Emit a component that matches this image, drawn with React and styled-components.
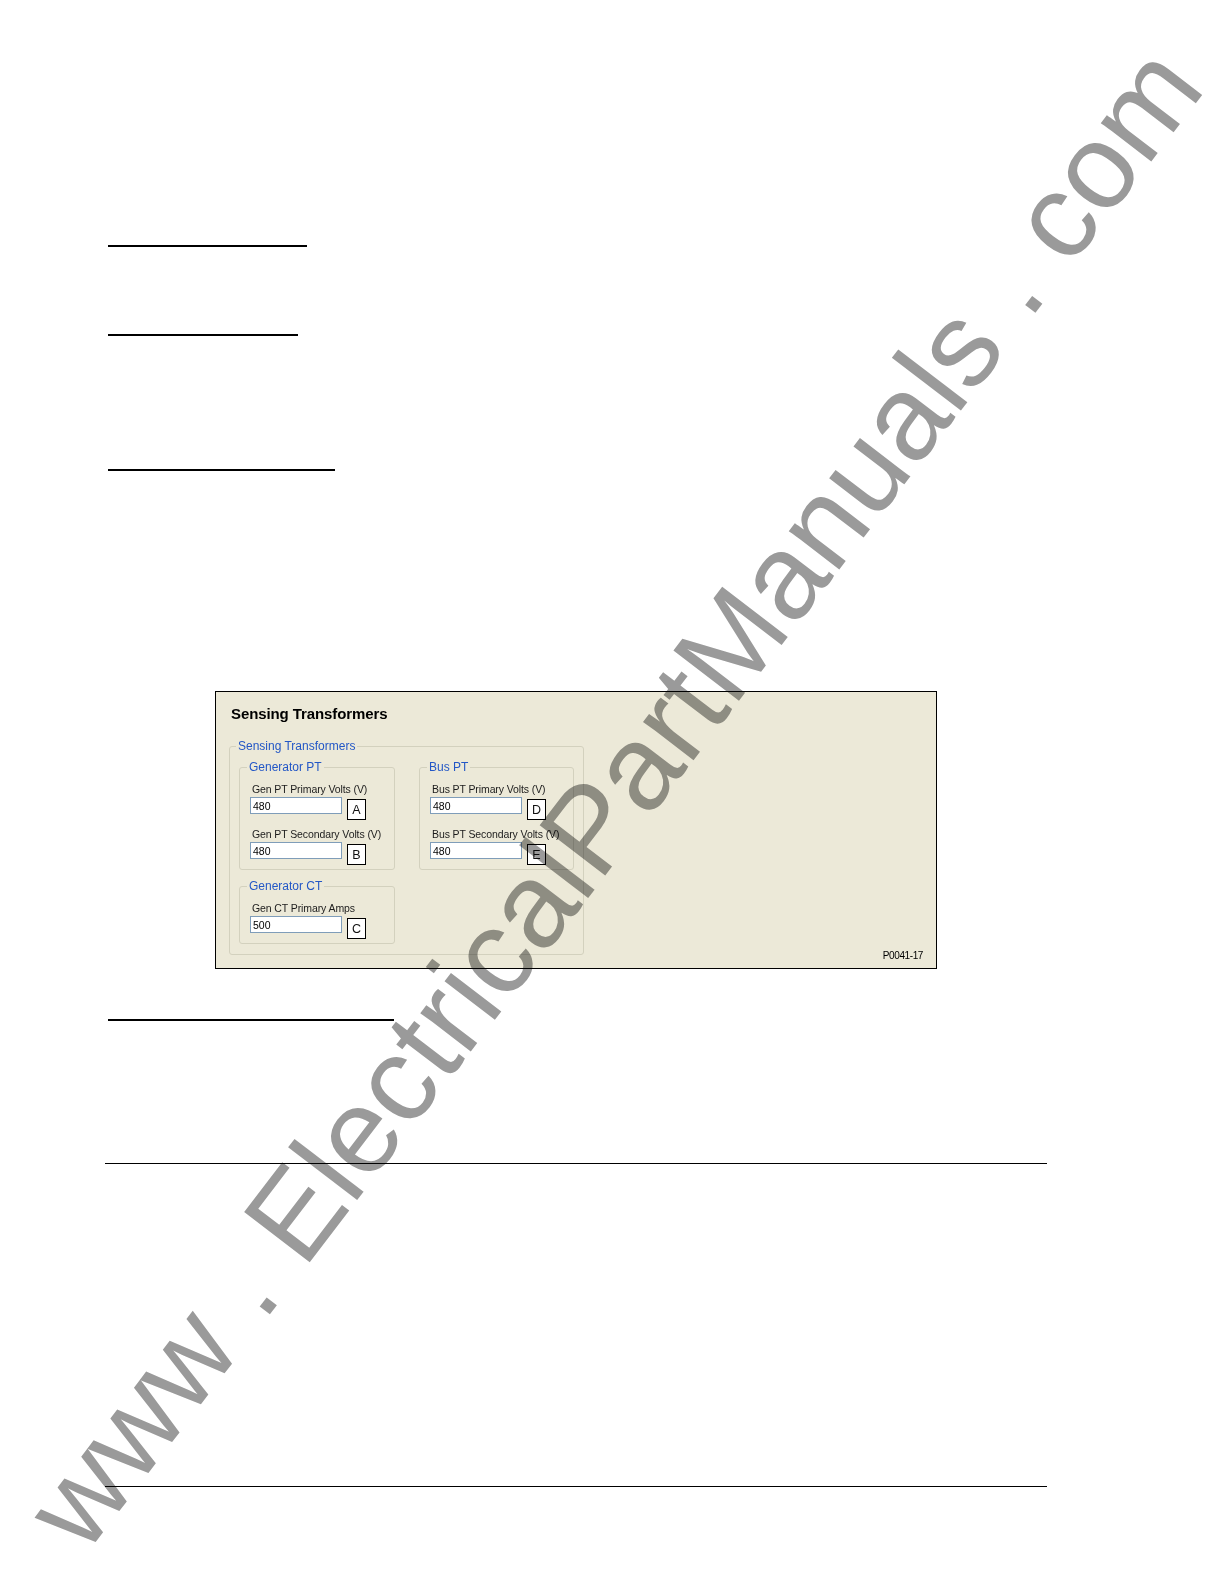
import React from "react";
import styled, { createGlobalStyle } from "styled-components";

const GlobalStyle = createGlobalStyle`
  html, body {
    margin: 0;
    padding: 0;
    background: #fff;
  }
`;

const Page = styled.div`
  position: relative;
  width: 1224px;
  height: 1584px;
  overflow: hidden;
  background: #fff;
  display: flex;
  flex-direction: column;
  align-items: flex-start;
  font-family: "Liberation Sans", Arial, sans-serif;
`;

const Rule = styled.div`
  width: ${({ $w }) => $w}px;
  height: ${({ $thick }) => $thick || 2}px;
  margin-top: ${({ $top }) => $top}px;
  margin-left: ${({ $left }) => $left || 108}px;
  background: #000;
`;

const Panel = styled.section`
  box-sizing: border-box;
  width: 722px;
  height: 278px;
  margin-top: ${({ $top }) => $top}px;
  margin-left: 215px;
  padding: 13px 13px 6px 13px;
  border: 1px solid #000;
  background: #ece9d8;
  display: flex;
  flex-direction: column;
`;

const PanelTitle = styled.h1`
  margin: 0 0 0 2px;
  font-size: 15px;
  line-height: 18px;
  font-weight: 700;
  color: #000;
  letter-spacing: -0.1px;
`;

const PanelBody = styled.div`
  flex: 1;
  display: flex;
  justify-content: space-between;
  align-items: flex-start;
`;

const Group = styled.fieldset`
  margin: 16px 0 0 0;
  padding: ${({ $pad }) => $pad};
  border: 1px solid #d3d1be;
  border-radius: 3px;
  min-width: 0;
`;

const Legend = styled.legend`
  margin-left: -3px;
  padding: 0 2px;
  font-size: 12px;
  line-height: 14px;
  color: #2357c6;
  white-space: nowrap;
`;

const SubGroup = styled(Group)`
  margin: 0;
  width: ${({ $w }) => $w}px;
  box-sizing: border-box;
`;

const GroupGrid = styled.div`
  display: grid;
  grid-template-columns: 156px 155px;
  column-gap: 24px;
  row-gap: 9px;
  align-items: start;
`;

const Field = styled.div`
  display: flex;
  flex-direction: column;
  & + & {
    margin-top: 8px;
  }
`;

const FieldLabel = styled.label`
  padding-left: 2px;
  font-size: 10.5px;
  line-height: 13px;
  color: #1c1c1c;
  white-space: nowrap;
  letter-spacing: -0.1px;
`;

const FieldRow = styled.div`
  display: flex;
  align-items: flex-start;
  gap: 5px;
  margin-top: 1px;
`;

const ValueInput = styled.input`
  box-sizing: border-box;
  width: 92px;
  height: 17px;
  margin: 0;
  padding: 0 2px;
  border: 1px solid #7f9db9;
  background: #fff;
  font-family: "Liberation Sans", Arial, sans-serif;
  font-size: 10.5px;
  color: #000;
  outline: none;
`;

const Callout = styled.span`
  box-sizing: border-box;
  width: 19px;
  height: 21px;
  margin-top: 2px;
  border: 1px solid #000;
  background: #fff;
  display: flex;
  align-items: center;
  justify-content: center;
  padding-top: 2px;
  font-size: 12.5px;
  line-height: 1;
  color: #111;
`;

const FigureId = styled.span`
  align-self: flex-end;
  font-size: 10px;
  line-height: 12px;
  letter-spacing: -0.4px;
  color: #000;
`;

const Watermark = styled.div`
  position: absolute;
  left: 4px;
  top: 1494px;
  transform-origin: 0 0;
  transform: rotate(-52.6deg);
  font-family: "Liberation Sans", Arial, sans-serif;
  font-size: 120px;
  line-height: 1;
  white-space: pre;
  color: #9a9a9a;
  mix-blend-mode: multiply;
  pointer-events: none;
`;

const InputField = ({ label, value, mark }) => (
  <Field>
    <FieldLabel>{label}</FieldLabel>
    <FieldRow>
      <ValueInput readOnly value={value} />
      <Callout>{mark}</Callout>
    </FieldRow>
  </Field>
);

export default function App() {
  return (
    <>
      <GlobalStyle />
      <Page>
        <Rule $w={199} $top={245} />
        <Rule $w={190} $top={87} />
        <Rule $w={227} $top={133} />

        <Panel $top={220}>
          <PanelTitle>Sensing Transformers</PanelTitle>
          <PanelBody>
            <Group $pad="7px 9px 10px 9px">
              <Legend>Sensing Transformers</Legend>
              <GroupGrid>
                <SubGroup $w={156} $pad="9px 9px 4px 10px">
                  <Legend>Generator PT</Legend>
                  <InputField label="Gen PT Primary Volts (V)" value="480" mark="A" />
                  <InputField label="Gen PT Secondary Volts (V)" value="480" mark="B" />
                </SubGroup>
                <SubGroup $w={155} $pad="9px 9px 4px 10px">
                  <Legend>Bus PT</Legend>
                  <InputField label="Bus PT Primary Volts (V)" value="480" mark="D" />
                  <InputField label="Bus PT Secondary Volts (V)" value="480" mark="E" />
                </SubGroup>
                <SubGroup $w={156} $pad="9px 9px 4px 10px">
                  <Legend>Generator CT</Legend>
                  <InputField label="Gen CT Primary Amps" value="500" mark="C" />
                </SubGroup>
              </GroupGrid>
            </Group>
            <FigureId>P0041-17</FigureId>
          </PanelBody>
        </Panel>

        <Rule $w={286} $top={50} />
        <Rule $w={942} $top={142} $left={105} $thick={1} />
        <Rule $w={942} $top={322} $left={105} $thick={1} />

        <Watermark>www . ElectricalPartManuals . com</Watermark>
      </Page>
    </>
  );
}
